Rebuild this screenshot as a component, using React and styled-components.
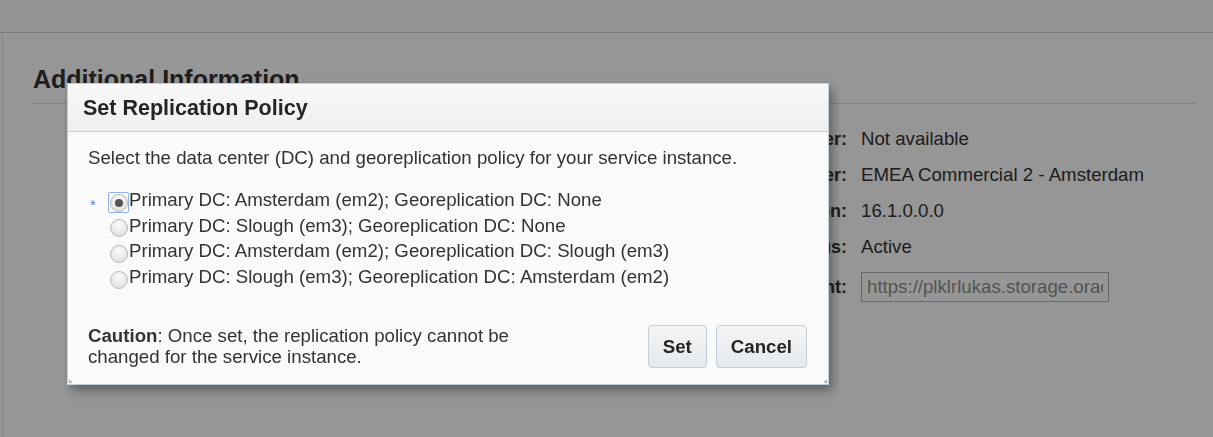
import React, { useState } from "react";
import styled, { createGlobalStyle } from "styled-components";

const GlobalStyle = createGlobalStyle`
  html, body {
    margin: 0;
    padding: 0;
    background: #ffffff;
    font-family: "Liberation Sans", Arial, sans-serif;
    color: #333333;
  }
  * { box-sizing: border-box; }
`;

const details = [
  { label: "Service Instance Owner:", value: "Not available" },
  { label: "Data Center:", value: "EMEA Commercial 2 - Amsterdam" },
  { label: "Version:", value: "16.1.0.0.0" },
  { label: "Status:", value: "Active" },
  { label: "REST Endpoint:", value: "https://plklrlukas.storage.oraclecloud.com", input: true },
];

const options = [
  "Primary DC: Amsterdam (em2); Georeplication DC: None",
  "Primary DC: Slough (em3); Georeplication DC: None",
  "Primary DC: Amsterdam (em2); Georeplication DC: Slough (em3)",
  "Primary DC: Slough (em3); Georeplication DC: Amsterdam (em2)",
];

const App = () => {
  const [selected, setSelected] = useState(0);

  return (
    <>
      <GlobalStyle />
      <Page>
        <TopBar />
        <Panel>
          <Heading>Additional Information</Heading>
          <Details>
            {details.map((d) => (
              <React.Fragment key={d.label}>
                <Label>{d.label}</Label>
                {d.input ? (
                  <Field readOnly value={d.value} />
                ) : (
                  <Value>{d.value}</Value>
                )}
              </React.Fragment>
            ))}
          </Details>
        </Panel>
      </Page>

      <Overlay />

      <Dialog>
        <DialogHeader>
          <DialogTitle>Set Replication Policy</DialogTitle>
        </DialogHeader>
        <DialogBody>
          <Intro>
            Select the data center (DC) and georeplication policy for your
            service instance.
          </Intro>
          <Choices>
            <Required>*</Required>
            <RadioList>
              {options.map((opt, i) => (
                <RadioRow key={opt} onClick={() => setSelected(i)}>
                  <RadioWrap $focused={i === 0}>
                    <Radio $checked={selected === i} />
                  </RadioWrap>
                  <RadioText>{opt}</RadioText>
                </RadioRow>
              ))}
            </RadioList>
          </Choices>
          <Footer>
            <Caution>
              <CautionLabel>Caution</CautionLabel>: Once set, the replication
              policy cannot be changed for the service instance.
            </Caution>
            <Buttons>
              <Button>Set</Button>
              <Button>Cancel</Button>
            </Buttons>
          </Footer>
        </DialogBody>
        <Grip $side="left" />
        <Grip $side="right" />
      </Dialog>
    </>
  );
};

export default App;

const Page = styled.div`
  width: 1213px;
  height: 437px;
  overflow: hidden;
  background: #ffffff;
`;

const TopBar = styled.div`
  height: 33px;
  background: #fbfbfb;
  border-bottom: 1px solid #d0d0d0;
`;

const Panel = styled.div`
  margin-left: 2px;
  height: 404px;
  border-left: 1px solid #e6e6e6;
  padding: 30px 17px 0 30px;
`;

const Heading = styled.h2`
  margin: 0;
  font-size: 25px;
  font-weight: bold;
  line-height: 32px;
  color: #333333;
  padding-bottom: 8px;
  border-bottom: 1px solid #d6dfe6;
`;

const Details = styled.div`
  display: grid;
  grid-template-columns: 814px auto;
  column-gap: 14px;
  row-gap: 14px;
  padding-top: 24px;
  align-items: center;
`;

const Label = styled.div`
  text-align: right;
  font-size: 18px;
  font-weight: bold;
  line-height: 22px;
  color: #333333;
`;

const Value = styled.div`
  font-size: 18.67px;
  line-height: 22px;
  color: #333333;
`;

const Field = styled.input`
  width: 248px;
  height: 30px;
  border: 1px solid #b0b0b0;
  padding: 0 5px;
  font-family: "Liberation Sans", Arial, sans-serif;
  font-size: 18.67px;
  color: #8f8f8f;
  background: #ffffff;
  outline: none;
`;

const Overlay = styled.div`
  position: fixed;
  inset: 0;
  background: rgba(0, 0, 0, 0.41);
`;

const Dialog = styled.div`
  position: fixed;
  left: 67px;
  top: 83px;
  width: 762px;
  height: 302px;
  background: #fafafa;
  border: 1px solid #c4ced7;
  box-shadow: 4px 6px 10px rgba(0, 0, 0, 0.35);
  display: flex;
  flex-direction: column;
`;

const DialogHeader = styled.div`
  height: 48px;
  background: linear-gradient(#f8f8f8, #efefef);
  border-bottom: 1px solid #c4ced7;
  display: flex;
  align-items: center;
  padding: 0 15px;
`;

const DialogTitle = styled.div`
  font-size: 21.5px;
  font-weight: bold;
  color: #252525;
  padding-top: 2px;
`;

const DialogBody = styled.div`
  flex: 1;
  padding: 15px 20px 0 20px;
  display: flex;
  flex-direction: column;
`;

const Intro = styled.div`
  font-size: 18.67px;
  line-height: 22px;
  color: #333333;
`;

const Choices = styled.div`
  display: flex;
  padding-top: 21px;
`;

const Required = styled.div`
  width: 20px;
  padding: 7px 0 0 2px;
  font-size: 15px;
  line-height: 15px;
  color: #4a7fcf;
`;

const RadioList = styled.div`
  display: flex;
  flex-direction: column;
`;

const RadioRow = styled.label`
  display: flex;
  align-items: flex-start;
  cursor: pointer;
  height: 25.7px;
`;

const RadioWrap = styled.span`
  width: 21px;
  height: 21px;
  margin-top: 2px;
  display: flex;
  align-items: center;
  justify-content: center;
  border: 1px solid ${(p) => (p.$focused ? "#8fb2ee" : "transparent")};
  border-radius: 2px;
`;

const Radio = styled.span`
  width: 18px;
  height: 18px;
  border-radius: 50%;
  border: 1px solid #b9b9b9;
  background: radial-gradient(circle at 50% 30%, #fbfbfb, #dadada);
  position: relative;

  &::after {
    content: "";
    display: ${(p) => (p.$checked ? "block" : "none")};
    position: absolute;
    left: 4px;
    top: 4px;
    width: 8px;
    height: 8px;
    border-radius: 50%;
    background: #555555;
  }
`;

const RadioText = styled.span`
  font-size: 18.67px;
  line-height: 20px;
  color: #333333;
`;

const Footer = styled.div`
  margin-top: auto;
  height: 80px;
  display: flex;
  justify-content: space-between;
  align-items: flex-start;
  padding-top: 18px;
  padding-right: 1px;
`;

const Caution = styled.div`
  width: 445px;
  font-size: 18.67px;
  line-height: 21px;
  color: #333333;
  padding-top: 3px;
`;

const CautionLabel = styled.b`
  font-weight: bold;
`;

const Buttons = styled.div`
  display: flex;
  gap: 9px;
  margin-top: 3px;
`;

const Button = styled.button`
  height: 43px;
  padding: 0 14px;
  border: 1px solid #c4ced7;
  border-radius: 4px;
  background: linear-gradient(#f3f5f6, #e6e9ec);
  font-family: "Liberation Sans", Arial, sans-serif;
  font-size: 18.67px;
  font-weight: bold;
  color: #252525;
  cursor: pointer;
`;

const Grip = styled.span`
  position: absolute;
  bottom: 1px;
  ${(p) => (p.$side === "left" ? "left: 1px;" : "right: 1px;")}
  width: 4px;
  height: 4px;
  background: #a8b0b8;
  clip-path: ${(p) =>
    p.$side === "left"
      ? "polygon(0 0, 100% 100%, 0 100%)"
      : "polygon(100% 0, 100% 100%, 0 100%)"};
`;
